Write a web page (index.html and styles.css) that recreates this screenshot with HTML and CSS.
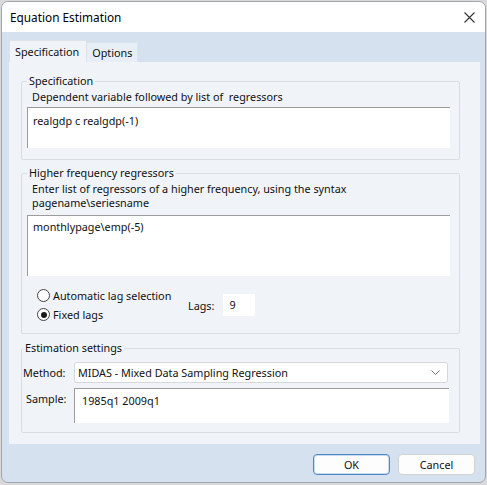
FILE: index.html
```html
<!DOCTYPE html>
<html>
<head>
<meta charset="utf-8">
<link rel="stylesheet" href="styles.css">
</head>
<body>
<div class="window">
  <div class="titlebar">
    <span class="title">Equation Estimation</span>
    <svg class="close" width="11" height="11" viewBox="0 0 11 11"><path d="M0.5 0.5L10.5 10.5M10.5 0.5L0.5 10.5" stroke="#333" stroke-width="1.1" fill="none"/></svg>
  </div>
  <div class="body">
    <div class="tabs">
      <div class="tab active">Specification</div>
      <div class="tab">Options</div>
    </div>
    <div class="panel">
      <div class="group g1">
        <div class="legend">Specification</div>
        <div class="hint h1">Dependent variable followed by list of&nbsp; regressors</div>
        <div class="textbox tb1">realgdp c realgdp(-1)</div>
      </div>
      <div class="group g2">
        <div class="legend">Higher frequency regressors</div>
        <div class="hint h2">Enter list of regressors of a higher frequency, using the syntax<br>pagename\seriesname</div>
        <div class="textbox tb2">monthlypage\emp(-5)</div>
        <div class="lagrow">
          <div class="radios">
            <div class="radio"><span class="dot"></span>Automatic lag selection</div>
            <div class="radio"><span class="dot on"></span>Fixed lags</div>
          </div>
          <div class="lags"><span>Lags:</span><span class="lagbox">9</span></div>
        </div>
      </div>
      <div class="group g3">
        <div class="legend">Estimation settings</div>
        <div class="row r1">
          <span class="lbl">Method:</span>
          <div class="select"><span>MIDAS - Mixed Data Sampling Regression</span>
            <svg width="9" height="5" viewBox="0 0 9 5"><path d="M0.5 0.5L4.5 4.5L8.5 0.5" stroke="#777" stroke-width="1" fill="none"/></svg>
          </div>
        </div>
        <div class="row r2">
          <span class="lbl lbl2">Sample:</span>
          <div class="textbox tb3">1985q1 2009q1</div>
        </div>
      </div>
    </div>
    <div class="buttons">
      <div class="btn ok">OK</div>
      <div class="btn">Cancel</div>
    </div>
  </div>
</div>
</body>
</html>
```
FILE: styles.css
```css
html, body { margin: 0; padding: 0; }
body {
  width: 487px; height: 485px; overflow: hidden;
  background: #d9d9d9;
  font-family: "Noto Sans", "Open Sans", sans-serif;
  font-size: 10.8px;
  color: #111;
}
.window {
  margin: 1px 0 0 1px;
  width: 485px;
  height: 482px;
  box-sizing: border-box;
  border: 1px solid #a3a7ad;
  border-radius: 7px;
  overflow: hidden;
  background: #d6e1ef;
  display: flex; flex-direction: column;
}
.titlebar {
  height: 30px;
  background: #fff;
  display: flex; align-items: center; justify-content: space-between;
  padding: 0 10px 0 8px;
  flex: none;
}
.title { font-size: 11.8px; color: #000; }
.body { flex: 1; padding: 8px 5px 0 7px; display: flex; flex-direction: column; }
.tabs { display: flex; align-items: flex-end; height: 22px; }
.tab {
  height: 20px; line-height: 20px; padding: 0 5px 0 5px; box-sizing: border-box;
  background: #e8eef6; border: 1px solid #dde3ea; border-bottom: none; border-left: none;
}
.tab.active { height: 22px; line-height: 22px; background: #f0f4f9; padding: 0 7px 0 5px; border: 1px solid #dde2e8; border-bottom: none; }
.panel {
  height: 382px;
  background: #f0f4f9;
  padding: 12px 0 0 12px;
  box-sizing: border-box;
}
.group {
  width: 439px; box-sizing: border-box;
  border: 1px solid #d9dde3; border-radius: 2px;
  padding: 0 9px 0 5px;
}
.legend {
  width: fit-content;
  margin-top: -8px; padding: 0 2px; line-height: 14px; background: #f0f4f9;
}
.hint { line-height: 14px; padding-left: 5px; }
.textbox {
  background: #fff; border-top: 1px solid #9c9c9c; border-left: 1px solid #9c9c9c;
  box-sizing: border-box; line-height: 14px;
}
.g1 { margin-top: 7px; height: 79px; }
.h1 { margin-top: 2px; }
.tb1 { height: 41px; margin-top: 3px; padding: 6px 5px; }
.g2 { margin-top: 13px; height: 161px; }
.h2 { margin-top: 2px; }
.tb2 { height: 61px; margin-top: 5px; padding: 4px 5px; }
.lagrow { display: flex; align-items: center; margin-top: 11px; margin-left: 10px; }
.radios { display: flex; flex-direction: column; gap: 2px; width: 151px; }
.radio { display: flex; align-items: center; height: 17px; }
.dot {
  width: 13px; height: 13px; border: 1px solid #444; border-radius: 50%;
  background: #fff; margin-right: 3px; box-sizing: border-box; position: relative; flex: none;
}
.dot.on::after {
  content: ""; position: absolute; left: 2.5px; top: 2.5px; width: 6px; height: 6px; border-radius: 50%; background: #1a1a1a;
}
.lags { display: flex; align-items: center; gap: 9px; }
.lagbox { background: #fff; width: 32px; height: 22px; line-height: 22px; padding-left: 6px; box-sizing: border-box; }
.g3 { margin-top: 14px; height: 85px; padding-left: 1px; padding-right: 11px; }
.row { display: flex; align-items: flex-start; }
.r1 { margin-top: 7px; }
.r2 { margin-top: 5px; }
.lbl { width: 51px; line-height: 21px; }
.lbl2 { padding-left: 3px; width: 48px; }
.select {
  flex: 1; height: 21px; background: #fff; border: 1px solid #d4d8dd; border-radius: 3px;
  display: flex; align-items: center; justify-content: space-between; padding: 0 7px 0 3px; box-sizing: border-box;
}
.tb3 { flex: 1; height: 35px; padding: 5px 7px; margin-right: -1px; }
.buttons { display: flex; justify-content: flex-end; gap: 8px; margin-top: 10px; padding-right: 5px; }
.btn {
  width: 77px; height: 21px; line-height: 19px; text-align: center; background: #fdfdfd;
  border: 1px solid #d2d2d2; border-radius: 4px; box-sizing: border-box;
}
.btn.ok { border: 1px solid #4f86c6; box-shadow: inset 0 0 0 1px #c8dcf1; }
```
